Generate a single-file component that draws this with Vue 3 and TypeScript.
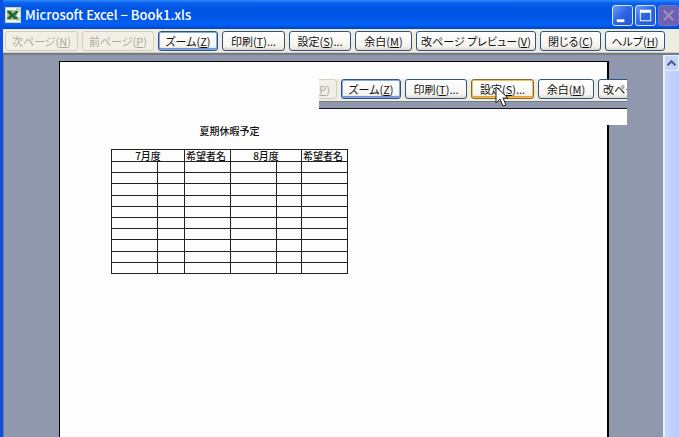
<script setup lang="ts">
interface ToolButton {
  label: string
  key: string
  tail?: string
  width: number
  disabled?: boolean
  state?: 'focus' | 'hover'
}

const buttons: ToolButton[] = [
  { label: '次ページ', key: 'N', width: 73, disabled: true },
  { label: '前ページ', key: 'P', width: 72, disabled: true },
  { label: 'ズーム', key: 'Z', width: 60, state: 'focus' },
  { label: '印刷', key: 'T', tail: '...', width: 63 },
  { label: '設定', key: 'S', tail: '...', width: 62 },
  { label: '余白', key: 'M', width: 57 },
  { label: '改ページ プレビュー', key: 'V', width: 120 },
  { label: '閉じる', key: 'C', width: 61 },
  { label: 'ヘルプ', key: 'H', width: 60 },
]

const closeUp: ToolButton[] = [
  { label: '前ページ', key: 'P', width: 72, disabled: true },
  { label: 'ズーム', key: 'Z', width: 60, state: 'focus' },
  { label: '印刷', key: 'T', tail: '...', width: 62 },
  { label: '設定', key: 'S', tail: '...', width: 63, state: 'hover' },
  { label: '余白', key: 'M', width: 56 },
  { label: '改ページ プレビュー', key: 'V', width: 120 },
]

const columns: number[] = [46, 27, 46, 46, 25, 46]
const rows = 10
</script>

<template>
  <div class="window">
    <header class="titlebar">
      <svg class="app-icon" viewBox="0 0 16 16" aria-hidden="true">
        <rect x="0" y="0" width="16" height="16" fill="#c4d2bd" />
        <rect x="1" y="1" width="14" height="14" fill="#f4f6ea" />
        <rect x="2" y="3" width="10" height="10" fill="#a9c79f" />
        <path d="M2 4h4l2 3 3-3h2v2l-3 2 3 3v1h-3L8 9l-3 3H2v-1l3-3-3-3z" fill="#2c7442" />
        <path d="M3 4l7 8M12 4l-8 8" stroke="#1c5a30" stroke-width="1.2" />
        <path d="M11 2h3v3M11 13h3v-3" stroke="#8cab84" fill="none" />
      </svg>
      <h1>Microsoft Excel − Book1.xls</h1>
      <div class="captions">
        <button class="caption" type="button" aria-label="最小化">
          <svg viewBox="0 0 20 20"><path d="M4 14h8v3H4z" fill="#fff" /></svg>
        </button>
        <button class="caption" type="button" aria-label="最大化">
          <svg viewBox="0 0 20 20"><path d="M4 4h12v12H4zM5 7v8h10V7z" fill="#fff" fill-rule="evenodd" /></svg>
        </button>
        <button class="caption close" type="button" aria-label="閉じる" disabled>
          <svg viewBox="0 0 20 20"><path d="M5 5l10 10M15 5L5 15" stroke="#a58fb8" stroke-width="2" /></svg>
        </button>
      </div>
    </header>

    <nav class="toolbar">
      <button
        v-for="b in buttons" :key="b.key" type="button" class="tool" :class="b.state"
        :disabled="b.disabled" :style="{ width: b.width + 'px' }"
      >{{ b.label }}(<u>{{ b.key }}</u>){{ b.tail }}</button>
    </nav>

    <main class="workspace">
      <section class="page">
        <h2>夏期休暇予定</h2>
        <table>
          <colgroup><col v-for="(w, i) in columns" :key="i" :style="{ width: w + 'px' }" /></colgroup>
          <thead>
            <tr>
              <th colspan="2">7月度</th><th class="name">希望者名</th>
              <th colspan="2">8月度</th><th class="name">希望者名</th>
            </tr>
          </thead>
          <tbody>
            <tr v-for="r in rows" :key="r"><td v-for="c in columns.length" :key="c"></td></tr>
          </tbody>
        </table>
      </section>
      <div class="scrollbar">
        <button type="button" class="scroll-up" aria-label="上へ">
          <svg viewBox="0 0 15 15"><path d="M3 10l4.500-4.500L12 10" fill="none" stroke="#4d6185" stroke-width="2.500" /></svg>
        </button>
        <div class="thumb"></div>
      </div>
    </main>

    <aside class="close-up">
      <div class="close-up-bar">
        <button
          v-for="b in closeUp" :key="b.key" type="button" class="tool" :class="b.state"
          :disabled="b.disabled" :style="{ width: b.width + 'px' }"
        >{{ b.label }}(<u>{{ b.key }}</u>){{ b.tail }}</button>
      </div>
      <div class="close-up-edge"></div>
      <svg class="pointer" viewBox="0 0 13 21" aria-hidden="true">
        <path d="M1 1v16l4-4 3 7 3-1-3-7h5z" fill="#fff" stroke="#222" stroke-width="1" />
      </svg>
    </aside>
  </div>
</template>

<style>
body {
  margin: 0;
}
</style>

<style scoped>
.window {
  position: relative;
  display: flex;
  flex-direction: column;
  height: 100vh;
  overflow: hidden;
  box-sizing: border-box;
  border-left: 3px solid #0d4fe0;
  background: #ece9d8;
  font-family: "Noto Sans CJK JP", sans-serif;
}
.titlebar {
  display: flex;
  flex: none;
  align-items: center;
  height: 29px;
  margin-left: -3px;
  padding-left: 5px;
  box-sizing: border-box;
  background: linear-gradient(#2f8bfa 0, #0a62ee 3px, #0055e3 8px, #0054e3 16px, #0461f8 24px, #0353dd 27px, #0340c0 29px);
}
.app-icon {
  flex: none;
  width: 16px;
  height: 16px;
}
h1 {
  flex: 1;
  margin: 0 0 0 4px;
  color: #fff;
  font-size: 13px;
  font-weight: 500;
  line-height: 20px;
  white-space: nowrap;
}
.captions {
  display: flex;
  flex: none;
  gap: 2px;
  padding-top: 2px;
}
.caption {
  width: 21px;
  height: 21px;
  padding: 0;
  border: 1px solid #d8e4ff;
  border-radius: 3px;
  background: linear-gradient(135deg, #6c9cf8, #2a63e6 50%, #2459d8);
}
.caption svg {
  display: block;
  width: 19px;
  height: 19px;
}
.close {
  border-color: #7c70c0;
  background: #6b62b4;
}
.toolbar {
  display: flex;
  flex: none;
  gap: 4px;
  height: 24px;
  padding: 2px 0 0 2px;
  box-sizing: border-box;
  border-bottom: 1px solid #d3cfbe;
  background: #efede0;
}
.tool {
  flex: none;
  height: 20px;
  padding: 0;
  box-sizing: border-box;
  border: 1px solid #2d5285;
  border-radius: 3px;
  background: linear-gradient(#fff, #f5f4ee 80%, #dcd8cc);
  color: #111;
  font-family: inherit;
  font-size: 11px;
  font-feature-settings: "palt";
  line-height: 18px;
  white-space: nowrap;
}
.tool:disabled {
  border-color: #d3d0c2;
  background: #f2f0e6;
  color: #aca899;
}
.focus {
  box-shadow: inset 0 0 0 1px #87a8e6, inset 0 -2px 0 #7193d8;
}
.hover {
  border-color: #7d6a38;
  box-shadow: inset 0 0 0 1px #f3c15a, inset 0 -2px 0 #e5a02c;
}
.workspace {
  display: flex;
  flex: 1;
  min-height: 0;
  border-top: 2px solid #777a86;
  border-left: 1px solid #777a86;
  background: #9098ae;
}
.page {
  flex: 1;
  margin: 6px 54px 0 55px;
  padding: 61px 0 0 51px;
  border: solid #000;
  border-width: 1px 2px 0 1px;
  background: #fdfdfd;
}
h2 {
  width: 237px;
  margin: 0 0 10px;
  color: #111;
  font-size: 10px;
  font-weight: 500;
  line-height: 16px;
  text-align: center;
}
table {
  width: 237px;
  height: 125px;
  border-collapse: collapse;
  table-layout: fixed;
}
th,
td {
  padding: 0;
  border: 1px solid #222;
}
th {
  height: 11px;
  color: #111;
  font-size: 10px;
  font-weight: 500;
  line-height: 10px;
  white-space: nowrap;
}
.name {
  padding-left: 1px;
  text-align: left;
}
.scrollbar {
  flex: none;
  width: 15px;
  border-left: 1px solid #f2f3f8;
  background: #e6ebfa;
}
.scroll-up {
  display: block;
  width: 15px;
  height: 16px;
  padding: 0;
  border: 1px solid #e8eefe;
  border-radius: 2px;
  background: #c5d4fb;
}
.scroll-up svg {
  display: block;
  width: 13px;
  height: 14px;
}
.thumb {
  height: 100%;
  border-left: 1px solid #e8eefe;
  background: linear-gradient(90deg, #c8d6fb, #b9cafa);
}
.close-up {
  position: absolute;
  top: 79px;
  left: 316px;
  width: 308px;
  height: 46px;
  overflow: hidden;
  background: #fdfdfd;
}
.close-up-bar {
  display: flex;
  justify-content: flex-start;
  gap: 4px;
  height: 22px;
  margin-left: -54px;
  background: #efede0;
}
.close-up-edge {
  height: 6px;
  border-top: 1px solid #777a86;
  border-bottom: 1px solid #15151f;
  background: #9098ae;
}
.pointer {
  position: absolute;
  top: 7px;
  left: 176px;
  width: 13px;
  height: 21px;
}
</style>
